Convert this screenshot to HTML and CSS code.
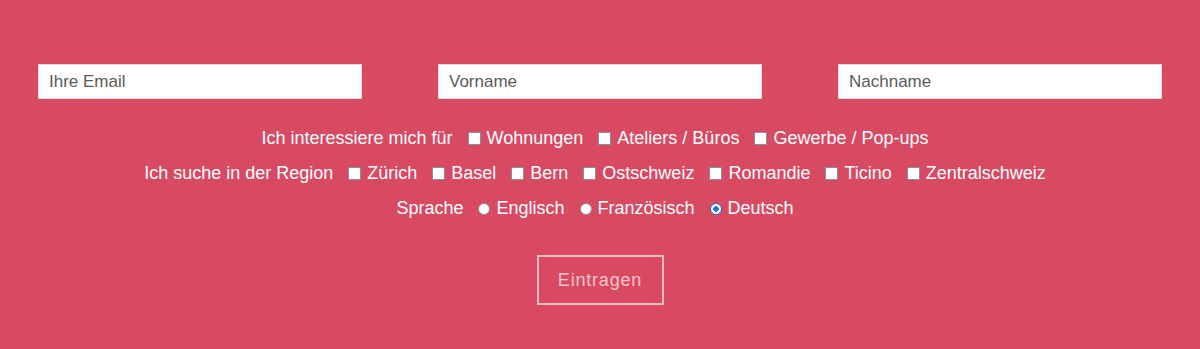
FILE: index.html
```html
<!DOCTYPE html>
<html lang="de">
<head>
<meta charset="utf-8">
<link rel="stylesheet" href="styles.css">
</head>
<body>
<form class="signup">
  <div class="fields">
    <input class="field" type="email" placeholder="Ihre Email">
    <input class="field" type="text" placeholder="Vorname">
    <input class="field" type="text" placeholder="Nachname">
  </div>
  <div class="row">
    <span class="label">Ich interessiere mich für</span>
    <label class="opt"><input type="checkbox" class="box">Wohnungen</label>
    <label class="opt"><input type="checkbox" class="box">Ateliers / Büros</label>
    <label class="opt"><input type="checkbox" class="box">Gewerbe / Pop-ups</label>
  </div>
  <div class="row">
    <span class="label">Ich suche in der Region</span>
    <label class="opt"><input type="checkbox" class="box">Zürich</label>
    <label class="opt"><input type="checkbox" class="box">Basel</label>
    <label class="opt"><input type="checkbox" class="box">Bern</label>
    <label class="opt"><input type="checkbox" class="box">Ostschweiz</label>
    <label class="opt"><input type="checkbox" class="box">Romandie</label>
    <label class="opt"><input type="checkbox" class="box">Ticino</label>
    <label class="opt"><input type="checkbox" class="box">Zentralschweiz</label>
  </div>
  <div class="row">
    <span class="label">Sprache</span>
    <label class="opt"><input type="radio" name="lang" class="radio">Englisch</label>
    <label class="opt"><input type="radio" name="lang" class="radio">Französisch</label>
    <label class="opt"><input type="radio" name="lang" class="radio" checked>Deutsch</label>
  </div>
  <div class="actions">
    <button type="button" class="submit">Eintragen</button>
  </div>
</form>
</body>
</html>
```

FILE: styles.css
```css
html, body {
  margin: 0;
  padding: 0;
  background: #d84a62;
  height: 100%;
}
body {
  font-family: "Liberation Sans", Arial, sans-serif;
  color: #fff;
  font-size: 18px;
}
.signup {
  padding: 64px 38px 0 38px;
}
.fields {
  display: flex;
  justify-content: space-between;
  margin-bottom: 22px;
}
.field {
  width: 324px;
  height: 35px;
  box-sizing: border-box;
  border: 1px solid #d9d9d9;
  background: #fff;
  padding: 0 10px;
  font-family: "Liberation Sans", Arial, sans-serif;
  font-size: 17px;
  color: #333;
  margin: 0;
}
.field::placeholder {
  color: #5a5a5a;
}
.row {
  display: flex;
  justify-content: center;
  align-items: center;
  height: 35px;
  gap: 15px;
  padding-right: 10px;
}
.opt {
  display: flex;
  align-items: center;
  gap: 6px;
}
.box {
  appearance: none;
  width: 13px;
  height: 13px;
  margin: 0;
  background: #fff;
  border: 1px solid #8a8f99;
  box-sizing: border-box;
}
.radio {
  appearance: none;
  width: 12px;
  height: 12px;
  margin: 0;
  background: #fff;
  border: 1px solid #8a8f99;
  border-radius: 50%;
  box-sizing: border-box;
}
.radio:checked {
  border: 1px solid #1a73e8;
  background: radial-gradient(circle, #1a73e8 0 2.5px, #fff 3px);
}
.actions {
  display: flex;
  justify-content: center;
  margin-top: 29px;
}
.submit {
  width: 127px;
  height: 50px;
  background: transparent;
  border: 2px solid #f4bcc5;
  color: #f7c5cd;
  font-family: "Liberation Sans", Arial, sans-serif;
  font-size: 18px;
  letter-spacing: 0.8px;
  padding: 0;
}
```
